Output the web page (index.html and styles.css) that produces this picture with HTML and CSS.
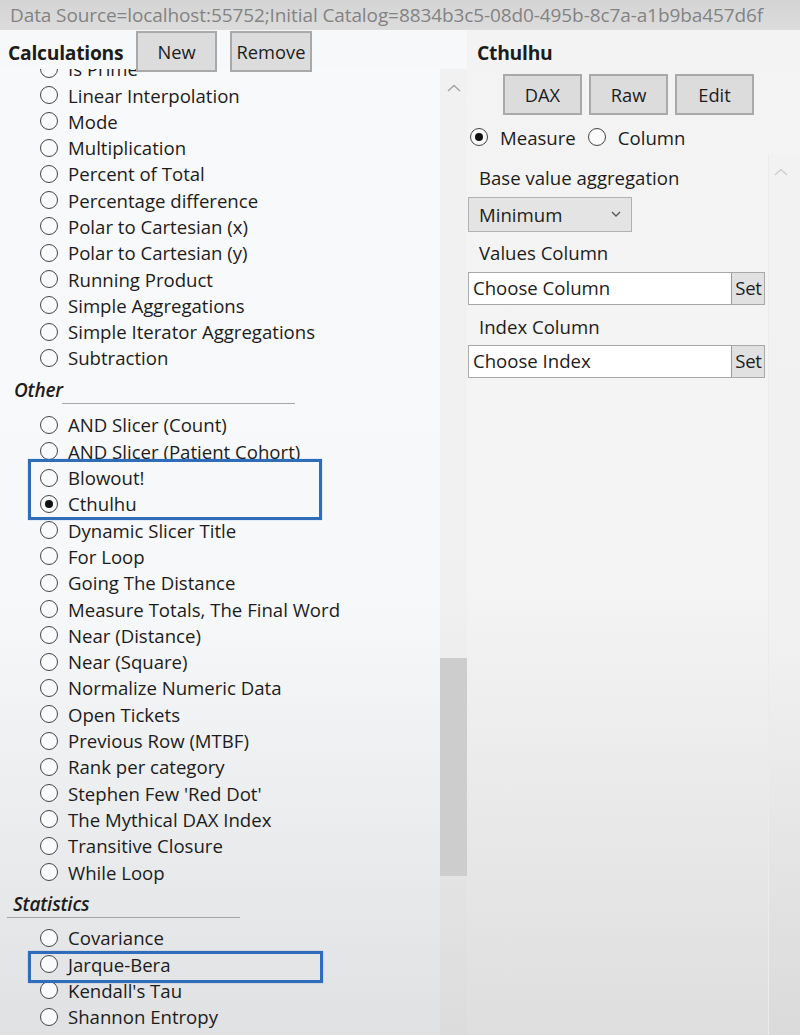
FILE: index.html
```html
<!DOCTYPE html>
<html>
<head>
<meta charset="utf-8">
<link rel="stylesheet" href="styles.css">
</head>
<body>
<div class="topbar">Data Source=localhost:55752;Initial Catalog=8834b3c5-08d0-495b-8c7a-a1b9ba457d6f</div>
<div class="main">
  <div class="lhead">
    <span class="ltitle">Calculations</span>
    <button class="btn btn-new">New</button>
    <button class="btn btn-remove">Remove</button>
  </div>
  <div class="list">
    <div class="opt first"><span class="radio"></span><span>Is Prime</span></div>
    <div class="opt"><span class="radio"></span><span>Linear Interpolation</span></div>
    <div class="opt"><span class="radio"></span><span>Mode</span></div>
    <div class="opt"><span class="radio"></span><span>Multiplication</span></div>
    <div class="opt"><span class="radio"></span><span>Percent of Total</span></div>
    <div class="opt"><span class="radio"></span><span>Percentage difference</span></div>
    <div class="opt"><span class="radio"></span><span>Polar to Cartesian (x)</span></div>
    <div class="opt"><span class="radio"></span><span>Polar to Cartesian (y)</span></div>
    <div class="opt"><span class="radio"></span><span>Running Product</span></div>
    <div class="opt"><span class="radio"></span><span>Simple Aggregations</span></div>
    <div class="opt"><span class="radio"></span><span>Simple Iterator Aggregations</span></div>
    <div class="opt"><span class="radio"></span><span>Subtraction</span></div>
    <div class="grp grp-other"><span class="grp-t">Other</span><span class="grp-line"></span></div>
    <div class="opt"><span class="radio"></span><span>AND Slicer (Count)</span></div>
    <div class="opt"><span class="radio"></span><span>AND Slicer (Patient Cohort)</span></div>
    <div class="opt"><span class="radio"></span><span>Blowout!</span></div>
    <div class="opt"><span class="radio on"></span><span>Cthulhu</span></div>
    <div class="opt"><span class="radio"></span><span>Dynamic Slicer Title</span></div>
    <div class="opt"><span class="radio"></span><span>For Loop</span></div>
    <div class="opt"><span class="radio"></span><span>Going The Distance</span></div>
    <div class="opt"><span class="radio"></span><span>Measure Totals, The Final Word</span></div>
    <div class="opt"><span class="radio"></span><span>Near (Distance)</span></div>
    <div class="opt"><span class="radio"></span><span>Near (Square)</span></div>
    <div class="opt"><span class="radio"></span><span>Normalize Numeric Data</span></div>
    <div class="opt"><span class="radio"></span><span>Open Tickets</span></div>
    <div class="opt"><span class="radio"></span><span>Previous Row (MTBF)</span></div>
    <div class="opt"><span class="radio"></span><span>Rank per category</span></div>
    <div class="opt"><span class="radio"></span><span>Stephen Few 'Red Dot'</span></div>
    <div class="opt"><span class="radio"></span><span>The Mythical DAX Index</span></div>
    <div class="opt"><span class="radio"></span><span>Transitive Closure</span></div>
    <div class="opt"><span class="radio"></span><span>While Loop</span></div>
    <div class="grp grp-stat"><span class="grp-t">Statistics</span><span class="grp-line"></span></div>
    <div class="opt"><span class="radio"></span><span>Covariance</span></div>
    <div class="opt"><span class="radio"></span><span>Jarque-Bera</span></div>
    <div class="opt"><span class="radio"></span><span>Kendall's Tau</span></div>
    <div class="opt"><span class="radio"></span><span>Shannon Entropy</span></div>
  </div>
  <div class="vscroll">
    <div class="arrow"><svg width="14" height="8" viewBox="0 0 14 8"><polyline points="1,7 7,1.5 13,7" fill="none" stroke="#a3a3a3" stroke-width="1.4"/></svg></div>
    <div class="thumb"></div>
  </div>
  <div class="right">
    <div class="rtitle">Cthulhu</div>
    <div class="rbtns">
      <button class="btn btn-sm">DAX</button>
      <button class="btn btn-sm">Raw</button>
      <button class="btn btn-sm">Edit</button>
    </div>
    <div class="rradios">
      <span class="radio on"></span><span class="rlabel">Measure</span>
      <span class="radio"></span><span class="rlabel">Column</span>
    </div>
    <div class="rscroll">
      <div class="form">
        <div class="flabel fl1">Base value aggregation</div>
        <div class="select"><span>Minimum</span><svg width="10" height="6" viewBox="0 0 10 6"><polyline points="1,1 5,5 9,1" fill="none" stroke="#555" stroke-width="1.3"/></svg></div>
        <div class="flabel fl2">Values Column</div>
        <div class="field f1"><span class="ftext">Choose Column</span><span class="setbtn">Set</span></div>
        <div class="flabel fl3">Index Column</div>
        <div class="field f2"><span class="ftext">Choose Index</span><span class="setbtn">Set</span></div>
      </div>
      <div class="rbar">
        <div class="arrow2"><svg width="14" height="8" viewBox="0 0 14 8"><polyline points="1,7 7,1.5 13,7" fill="none" stroke="#cfcfcf" stroke-width="1.3"/></svg></div>
      </div>
    </div>
  </div>
</div>
<div class="mark mark1"></div>
<div class="mark mark2"></div>
</body>
</html>
```
FILE: styles.css
```css
* { box-sizing: border-box; }
html, body { margin: 0; padding: 0; }
body {
  width: 800px;
  height: 1035px;
  overflow: hidden;
  position: relative;
  font-family: "Open Sans", "Noto Sans", sans-serif;
  color: #1c1c1c;
  background: #f5f5f5;
}
.topbar {
  height: 30px;
  background: linear-gradient(#d4d4d4, #dcdcdc);
  color: #838383;
  font-size: 19px;
  line-height: 30px;
  padding-left: 10px;
  white-space: nowrap;
  overflow: hidden;
  letter-spacing: -0.1px;
}
.main {
  display: grid;
  grid-template-columns: 440px 27px 333px;
  grid-template-rows: 39px 966px;
  height: 1005px;
}
.lhead {
  grid-column: 1 / 3;
  grid-row: 1;
  display: flex;
  align-items: flex-start;
  position: relative;
  z-index: 2;
  background: #f7f8fa;
}
.ltitle {
  font-weight: 700;
  font-size: 19.3px;
  line-height: 24px;
  margin: 11px 0 0 8px;
  width: 128px;
  letter-spacing: -0.25px;
  white-space: nowrap;
}
.btn {
  font-family: inherit;
  font-size: 18.3px;
  color: #1c1c1c;
  background: #dcdcdc;
  border: 2px solid #a9a9a9;
  padding: 0;
  height: 41px;
  margin-top: 1px;
}
.btn-new { width: 81px; }
.btn-remove { width: 82px; margin-left: 13px; }
.list {
  grid-column: 1;
  grid-row: 2;
  overflow: hidden;
  background: linear-gradient(#f8f9fb 0%, #f7f8fa 55%, #e0e1e3 100%);
}
.opt {
  height: 26.3px;
  display: flex;
  align-items: center;
  padding-left: 40px;
  gap: 10px;
  font-size: 18.6px;
  white-space: nowrap;
}
.opt.first { margin-top: -13.45px; }
.radio {
  width: 18px;
  height: 18px;
  border: 1.4px solid #444;
  border-radius: 50%;
  flex: none;
  display: flex;
  align-items: center;
  justify-content: center;
  background: #fafafa;
}
.radio.on::after {
  content: "";
  width: 8px;
  height: 8px;
  border-radius: 50%;
  background: #111;
}
.grp {
  display: flex;
  flex-direction: column;
  padding-left: 14px;
}
.grp-other { height: 40.7px; padding-top: 7px; }
.grp-stat { height: 39.6px; padding-top: 6.75px; padding-left: 13px; }
.grp-t {
  font-style: italic;
  font-weight: 600;
  font-size: 19px;
  line-height: 24px;
  letter-spacing: -0.2px;
}
.grp-line {
  height: 1px;
  width: 233px;
  background: #a5a5a5;
  margin-top: 1px;
}
.grp-other .grp-line { margin-left: 48px; }
.grp-stat .grp-line { margin-left: -6px; }
.vscroll {
  grid-column: 2;
  grid-row: 2;
  background: linear-gradient(#f1f1f1 0%, #f0f0f0 55%, #dcdcdc 100%);
  display: flex;
  flex-direction: column;
  align-items: center;
}
.arrow {
  height: 37px;
  padding-top: 15px;
  padding-left: 1px;
}
.arrow svg { display: block; }
.thumb {
  width: 27px;
  height: 218px;
  margin-top: 552px;
  background: #cdcdcd;
}
.right {
  grid-column: 3;
  grid-row: 1 / 3;
  display: flex;
  flex-direction: column;
  background: linear-gradient(#f3f3f3 0%, #f4f4f4 55%, #dedede 100%);
}
.rtitle {
  font-weight: 700;
  font-size: 19.3px;
  line-height: 24px;
  margin: 11px 0 0 10px;
  letter-spacing: -0.25px;
}
.rbtns {
  display: flex;
  gap: 7px;
  margin: 9px 0 0 36px;
}
.btn-sm { width: 79px; margin-top: 0; }
.rradios {
  display: flex;
  align-items: center;
  height: 24px;
  margin: 10px 0 0 3px;
  font-size: 18.6px;
}
.rlabel { margin-left: 12px; margin-right: 12px; }
.rscroll {
  flex: 1;
  display: grid;
  grid-template-columns: 301px 32px;
  margin-top: 6px;
}
.form {
  display: flex;
  flex-direction: column;
  align-items: flex-start;
  padding-left: 1px;
  font-size: 18.6px;
}
.flabel {
  line-height: 24px;
  height: 24px;
  padding-left: 11px;
  white-space: nowrap;
}
.fl1 { margin-top: 11px; }
.fl2 { margin-top: 9px; }
.fl3 { margin-top: 10px; }
.select {
  margin-top: 7px;
  width: 164px;
  height: 35px;
  background: #e4e4e4;
  border: 1.5px solid #b1b1b1;
  display: flex;
  align-items: center;
  justify-content: space-between;
  padding: 0 10px 0 10px;
}
.select svg { display: block; margin-top: -2px; }
.field {
  width: 297px;
  height: 33px;
  display: flex;
  border: 1.5px solid #a8a8a8;
  background: #fff;
}
.f1 { margin-top: 7px; }
.f2 { margin-top: 6px; }
.ftext {
  flex: 1;
  padding-left: 4px;
  line-height: 30px;
  white-space: nowrap;
}
.setbtn {
  width: 33px;
  background: #e1e1e1;
  border-left: 1.5px solid #9a9a9a;
  line-height: 30px;
  text-align: center;
  padding-left: 1px;
  letter-spacing: -0.3px;
}
.rbar {
  border-left: 1px solid #ebebeb;
  background: linear-gradient(#f2f2f2 0%, #f1f1f1 55%, #dadada 100%);
  display: flex;
  justify-content: flex-start;
  padding-left: 5px;
}
.arrow2 { padding-top: 13px; }
.arrow2 svg { display: block; }
.mark {
  position: absolute;
  border: 3px solid #2f6cba;
  box-shadow: 0 0 1px rgba(47,108,186,0.6);
}
.mark1 { left: 28px; top: 459px; width: 294px; height: 61px; }
.mark2 { left: 28px; top: 951px; width: 295px; height: 32px; }
```
